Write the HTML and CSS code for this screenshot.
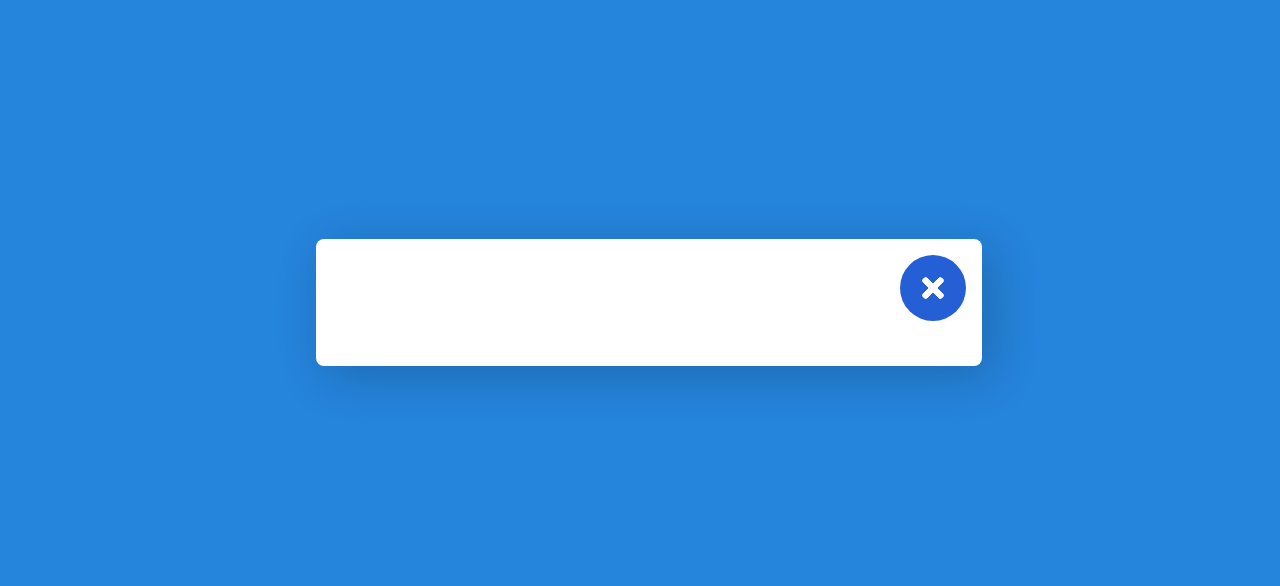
FILE: index.html
```
<!DOCTYPE html>
<html lang="en">
<head>
  <meta charset="utf-8">
  <meta name="viewport" content="width=device-width, initial-scale=1">
  <title>Search</title>
  <link rel="stylesheet" href="styles.css">
</head>
<body>
  <main class="page">
    <form class="search-box">
      <input class="search-input" type="text" aria-label="Search">
      <button class="close-button" type="button" aria-label="Close">
        <svg class="close-icon" viewBox="-8 72 368 368" aria-hidden="true">
          <path d="M242.72 256l100.07-100.07c12.28-12.28 12.28-32.19 0-44.48l-22.24-22.24c-12.28-12.28-32.19-12.28-44.48 0L176 189.28 75.93 89.21c-12.28-12.28-32.19-12.28-44.48 0L9.21 111.45c-12.28 12.28-12.28 32.19 0 44.48L109.28 256 9.21 356.07c-12.28 12.28-12.28 32.19 0 44.48l22.24 22.24c12.28 12.28 32.2 12.28 44.48 0L176 322.72l100.07 100.07c12.28 12.28 32.2 12.28 44.48 0l22.24-22.24c12.28-12.28 12.28-32.19 0-44.48L242.72 256z"/>
        </svg>
      </button>
    </form>
  </main>
</body>
</html>
```

FILE: styles.css
```
* {
  box-sizing: border-box;
}

body {
  margin: 0;
  background: #2584dc;
  font-family: "Open Sans", sans-serif;
}

.page {
  display: flex;
  align-items: center;
  justify-content: center;
  min-height: 100vh;
  padding: 18px 0 0 18px;
}

.search-box {
  display: flex;
  align-items: flex-start;
  width: 666px;
  max-width: 100%;
  padding: 16px;
  border-radius: 8px;
  background: #fff;
  box-shadow: 10px 10px 50px rgba(0, 0, 0, 0.2);
}

.search-input {
  flex: 1;
  min-width: 0;
  height: 95px;
  padding: 0 16px;
  border: 0;
  outline: 0;
  background: transparent;
  font: inherit;
  font-size: 32px;
}

.close-button {
  display: grid;
  flex: none;
  place-items: center;
  width: 66px;
  height: 66px;
  padding: 0;
  border: 0;
  border-radius: 50%;
  background: #255fd5;
  color: #fff;
  cursor: pointer;
}

.close-icon {
  width: 22px;
  height: 22px;
  fill: currentColor;
  stroke: currentColor;
  stroke-width: 16;
}
```
